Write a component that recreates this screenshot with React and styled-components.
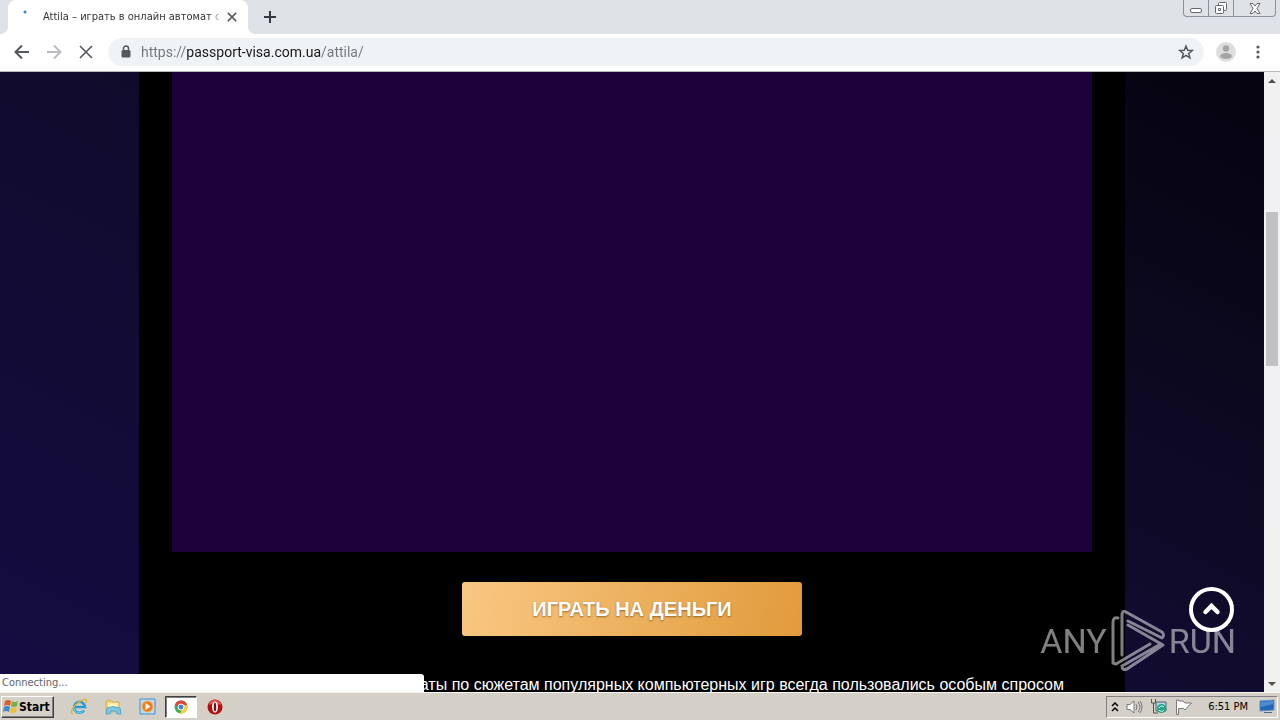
import React from "react";
import styled, { createGlobalStyle, css } from "styled-components";

const GlobalStyle = createGlobalStyle`
  * { box-sizing: border-box; }
  body { margin: 0; overflow: hidden; font-family: "DejaVu Sans Condensed", "DejaVu Sans", sans-serif; }
  button { border: 0; padding: 0; background: none; font: inherit; color: inherit; cursor: pointer; }
  svg { display: block; }
`;

const Screen = styled.div`
  display: flex;
  flex-direction: column;
  height: 100vh;
`;

/* Browser frame */
const TabStrip = styled.header`
  display: flex;
  flex: none;
  height: 34px;
  background: #dee1e6;
`;
const Tab = styled.div`
  position: relative;
  display: flex;
  align-items: center;
  width: 240px;
  margin-left: 8px;
  padding: 0 10px 0 12px;
  background: #fff;
  border-radius: 8px 8px 0 0;
  &::before, &::after {
    content: "";
    position: absolute;
    bottom: 0;
    width: 8px;
    height: 8px;
  }
  &::before { left: -8px; background: radial-gradient(circle at 0 0, #dee1e6 8px, #fff 8px); }
  &::after { right: -8px; background: radial-gradient(circle at 100% 0, #dee1e6 8px, #fff 8px); }
`;
const TabTitle = styled.span`
  flex: 1;
  min-width: 0;
  margin: 0 7px;
  overflow: hidden;
  white-space: nowrap;
  font-size: 11px;
  line-height: 16px;
  color: #303338;
  mask-image: linear-gradient(to right, #000 calc(100% - 10px), rgba(0, 0, 0, 0.3));
`;
const IconButton = styled.button`
  display: grid;
  place-items: center;
  flex: none;
  width: ${(p) => p.$size}px;
  height: ${(p) => p.$size}px;
`;
const NewTab = styled(IconButton)`
  margin: 3px 0 0 8px;
`;
const WindowControls = styled.div`
  display: flex;
  height: 17px;
  margin: 0 4px 0 auto;
  border: 1px solid #8b919b;
  border-top: 0;
  border-radius: 0 0 4px 4px;
`;
const WindowButton = styled.button`
  display: grid;
  place-items: center;
  width: ${(p) => p.$width}px;
  & + & { border-left: 1px solid #8b919b; }
`;

const Toolbar = styled.nav`
  display: flex;
  align-items: center;
  flex: none;
  height: 38px;
  padding: 0 10px 2px 6px;
  background: #fff;
  border-bottom: 1px solid #b6b7ba;
`;
const AddressBar = styled.label`
  display: flex;
  align-items: center;
  flex: 1;
  height: 28px;
  margin: 0 8px 0 6px;
  padding: 0 10px 0 12px;
  gap: 9px;
  border-radius: 14px;
  background: #f0f3f5;
`;
const AddressInput = styled.input`
  flex: 1;
  min-width: 0;
  height: 24px;
  border: 0;
  padding: 0;
  outline: 0;
  font: 14px/24px Roboto, "Noto Sans", sans-serif;
  color: #202124;
  background: linear-gradient(to right, #73777c 45px, #15171a 45px 180px, #73777c 180px);
  background-clip: text;
  -webkit-text-fill-color: transparent;
`;
const MenuButton = styled(IconButton)`
  margin-left: 6px;
`;

/* Page */
const Viewport = styled.div`
  position: relative;
  display: flex;
  flex: 1;
  min-height: 0;
`;
const Page = styled.main`
  flex: 1;
  min-width: 0;
  overflow: hidden;
  padding: 0 139px;
  background: linear-gradient(to top right, #150c42, #110b2e 50%, #0c081e 75%, #05030f);
`;
const Article = styled.article`
  display: flex;
  flex-direction: column;
  align-items: center;
  min-height: 100%;
  padding: 0 33px;
  background: #000;
`;
const GameFrame = styled.section`
  align-self: stretch;
  height: 480px;
  background: #1d003a;
`;
const PlayButton = styled.button`
  width: 340px;
  height: 54px;
  margin: 30px 0 38px;
  border-radius: 3px;
  background: linear-gradient(100deg, #f9c783, #e09b3b);
  color: #fff;
  font: bold 20px/54px "Liberation Sans", sans-serif;
  text-shadow: 0 1px 2px rgba(90, 50, 0, 0.6);
`;
const Intro = styled.p`
  align-self: stretch;
  margin: 0;
  padding-right: 28px;
  font: 16px/22px "Liberation Sans", sans-serif;
  color: #fff;
  text-align: right;
  white-space: nowrap;
`;
const ScrollTrack = styled.div`
  display: flex;
  flex-direction: column;
  width: 16px;
  background: #f1f1f1;
`;
const ScrollThumb = styled.div`
  flex: 154;
  margin: 0 2px;
  background: #c1c1c1;
`;
const Gap = styled.div`
  flex: ${(p) => p.$grow};
`;
const ScrollButton = styled.button`
  display: grid;
  place-items: center;
  height: 17px;
`;
const StatusBubble = styled.div`
  position: absolute;
  left: 0;
  bottom: 0;
  width: 424px;
  height: 18px;
  padding-left: 2px;
  border-radius: 0 3px 0 0;
  background: #fff;
  color: #5f6368;
  font-size: 11px;
  line-height: 18px;
`;
const Watermark = styled.div`
  position: absolute;
  right: 44px;
  bottom: 20px;
  display: flex;
  align-items: center;
  gap: 4px;
  height: 62px;
  opacity: 0.5;
  color: #fff;
  font: 34px/62px Roboto, "DejaVu Sans Condensed", sans-serif;
`;
const ToTop = styled.button`
  position: absolute;
  right: 46px;
  bottom: 60px;
  width: 45px;
  height: 45px;
`;

/* Taskbar */
const Taskbar = styled.footer`
  display: flex;
  align-items: center;
  flex: none;
  height: 28px;
  padding: 0 0 0 1px;
  background: #d4d0c8;
  border-top: 1px solid #f8f7f4;
`;
const raised = css`
  border: 1px solid;
  border-color: #fff #404040 #404040 #fff;
  box-shadow: inset -1px -1px #808080;
`;
const StartButton = styled.button`
  ${raised}
  display: flex;
  align-items: center;
  width: 53px;
  height: 22px;
  margin-right: 8px;
  font: bold 12px/20px "DejaVu Sans Condensed", sans-serif;
  color: #000;
`;
const TaskButton = styled.button`
  display: grid;
  place-items: center;
  width: ${(p) => (p.$active ? 32 : 34)}px;
  height: 22px;
  ${(p) => p.$active && css`
    margin: 0 1px;
    background: #fff;
    border: 1px solid;
    border-color: #404040 #fff #fff #404040;
    box-shadow: inset 1px 1px #808080;
  `}
`;
const Tray = styled.div`
  display: flex;
  align-items: center;
  height: 22px;
  margin: 0 2px 0 auto;
  padding: 0 1px 0 4px;
  gap: 7px;
  border: 1px solid;
  border-color: #808080 #fff #fff #808080;
  font-size: 11px;
  color: #000;
`;
const Clock = styled.time`
  margin: 0 4px 0 9px;
`;

const Line = ({ d, size = 16, color = "#54575b", width = 2 }) => (
  <svg width={size} height={size} viewBox="0 0 16 16" fill="none" stroke={color} strokeWidth={width}>
    <path d={d} />
  </svg>
);

const WindowsFlag = () => (
  <svg width="17" height="17" viewBox="0 0 17 17">
    <path d="M3 3q3-2 6 0L8 8Q5 6 2 8Z" fill="#e6592b" />
    <path d="M10 3q3 2 6 0l-1 5q-3 2-6 0Z" fill="#72b545" />
    <path d="M2 9q3-2 6 0l-1 5q-3-2-6 0Z" fill="#388bd1" />
    <path d="M9 9q3 2 6 0l-1 5q-3 2-6 0Z" fill="#f4bd35" />
  </svg>
);
const ExplorerIcon = () => (
  <svg width="18" height="18" viewBox="0 0 18 18" fill="none">
    <path d="M14 12.500A5.500 5.500 0 1 1 15 9H5" stroke="#269bd7" strokeWidth="2.600" />
    <path d="M13.500 12A5 5 0 0 1 4 10" stroke="#72cff2" />
    <path d="M3 16C-1 15 3 8 9 4s9-3 7 1" stroke="#e6b431" strokeWidth="1.500" />
  </svg>
);
const FolderIcon = () => (
  <svg width="18" height="18" viewBox="0 0 18 18">
    <path d="M2 3l5-1 1 2h7v10H2Z" fill="#efd073" stroke="#d4b35c" />
    <path d="M4 5h10v5H4Z" fill="#fff4b5" />
    <path d="M3 10q6-3 13 0l1 6h-4l-1-3H7l-1 3H2Z" fill="#7cc6e4" stroke="#5aa6c6" />
  </svg>
);
const PlayerIcon = () => (
  <svg width="17" height="17" viewBox="0 0 17 17">
    <path d="M1 1h15v15H1Z" fill="#b8dcf4" stroke="#438ec5" />
    <circle cx="8.500" cy="8.500" r="5.500" fill="#f17b16" stroke="#fbb15b" />
    <path d="M6.500 5v7l5-3.500Z" fill="#fff" />
  </svg>
);
const ChromeIcon = () => (
  <svg width="14" height="14" viewBox="0 0 14 14">
    <circle cx="7" cy="7" r="6.500" fill="#3fae53" />
    <path d="M1 4.500A6.500 6.500 0 0 1 13.200 5H7L5 9Z" fill="#e64537" />
    <path d="M13.200 5A6.500 6.500 0 0 1 6 13.500L9.500 7 8 5Z" fill="#f7cc39" />
    <circle cx="7" cy="7" r="3" fill="#4285e8" stroke="#fff" />
  </svg>
);
const OperaIcon = () => (
  <svg width="16" height="16" viewBox="0 0 16 16">
    <circle cx="8" cy="8" r="7.500" fill="#b50e12" />
    <path d="M2 6a6 5 0 0 1 12 0q-6-3-12 0" fill="#e75350" />
    <ellipse cx="8" cy="8" rx="3" ry="5.500" fill="#fff" />
    <ellipse cx="8" cy="8" rx="1.200" ry="4.500" fill="#8b090d" />
  </svg>
);
const SpeakerIcon = () => (
  <svg width="17" height="16" viewBox="0 0 17 16" fill="#fff" stroke="#77777a">
    <path d="M1 5.500h3L8 2v12l-4-3.500H1Z" />
    <path d="M10 5q2 3 0 6M12 3q4 5 0 10M14 2q4 6 0 12" fill="none" />
  </svg>
);
const NetworkIcon = () => (
  <svg width="18" height="17" viewBox="0 0 18 17">
    <path d="M6 4h10v9H6Z" fill="#a9d6e0" stroke="#54656b" />
    <path d="M1.500 1v4h4V1M3.500 5v10H8" fill="none" stroke="#4f5455" />
    <circle cx="11.500" cy="10.500" r="4.500" fill="#26a188" />
    <path d="M9 10a3 3 0 0 1 5-1M14 12a3 3 0 0 1-5 0" fill="none" stroke="#dff7ef" />
  </svg>
);
const FlagIcon = () => (
  <svg width="17" height="16" viewBox="0 0 17 16" fill="#fff" stroke="#77777a">
    <path d="M1.500 1v14.500h2V9.500h5l1.500 1.500 2.500-3 4-4h-6.500l-2-2H3.500V1Z" />
  </svg>
);
const DesktopIcon = () => (
  <svg width="17" height="15" viewBox="0 0 17 15">
    <path d="M1 2l14-1v10L1 12Z" fill="#2766b7" stroke="#5d90c8" />
    <path d="M2 3l12-1v3L2 8Z" fill="#508cd1" />
    <path d="M5 13h8v1H5Z" fill="#4a6a8c" />
  </svg>
);
const WatermarkLogo = () => (
  <svg width="54" height="62" viewBox="0 0 54 62" fill="none" stroke="#fff" strokeWidth="3" strokeLinejoin="round" strokeLinecap="round">
    <path d="M7 8Q2 7 2 12V53L5 54 39 34M11 45V5Q11 0 15 2L51 22Q54 25 51 28L17 11M17 15L52 35 16 59Q11 61 11 56L48 35" />
  </svg>
);
const Arrow = ({ up }) => (
  <svg width="8" height="4" viewBox="0 0 8 4"><path d={up ? "M0 4l4-4 4 4Z" : "M0 0h8L4 4Z"} fill="#505050" /></svg>
);

export default function App() {
  return (
    <Screen>
      <GlobalStyle />
      <TabStrip>
        <Tab>
          <svg width="16" height="16" viewBox="0 0 16 16"><circle cx="5" cy="3" r="1.500" fill="#4280ce" /></svg>
          <TabTitle>Attila – играть в онлайн автомат с</TabTitle>
          <IconButton $size={12} aria-label="Close tab"><Line size={12} d="M2.500 2.500l11 11M13.500 2.500l-11 11" /></IconButton>
        </Tab>
        <NewTab $size={28} aria-label="New tab"><Line d="M8 2v12M2 8h12" color="#34383f" /></NewTab>
        <WindowControls>
          <WindowButton $width={24} aria-label="Minimize">
            <svg width="12" height="14" viewBox="0 0 12 14"><rect x=".5" y="7.500" width="11" height="4" rx="1.500" fill="#fff" stroke="#62666e" /></svg>
          </WindowButton>
          <WindowButton $width={25} aria-label="Restore">
            <svg width="14" height="14" viewBox="0 0 14 14" fill="#fff" stroke="#62666e"><rect x="4.500" y="1.500" width="8" height="8" rx="1" /><rect x="1.500" y="4.500" width="8" height="8" rx="1" /><path d="M4.500 7.500h2v2h-2Z" /></svg>
          </WindowButton>
          <WindowButton $width={42} aria-label="Close">
            <svg width="12" height="11" viewBox="0 0 12 11"><path d="M1 .5h3l2 2.500 2-2.500h3L8 5.500l3 5H8L6 8l-2 2.500H1l3-5Z" fill="#fff" stroke="#62666e" /></svg>
          </WindowButton>
        </WindowControls>
      </TabStrip>
      <Toolbar>
        <IconButton $size={32} aria-label="Back"><Line d="M15 8H2M8 1.500L1.500 8 8 14.500" /></IconButton>
        <IconButton $size={32} aria-label="Forward"><Line d="M1 8h13M8 1.500L14.500 8 8 14.500" color="#b9bbbe" /></IconButton>
        <IconButton $size={32} aria-label="Stop"><Line d="M2 2l12 12M14 2L2 14" width={1.6} /></IconButton>
        <AddressBar>
          <svg width="12" height="14" viewBox="0 0 12 14" fill="none"><path d="M3 6.500h6V11H3Z" fill="#55595e" stroke="#55595e" strokeWidth="3" strokeLinejoin="round" /><path d="M3.500 6V3.500a2.500 2.500 0 0 1 5 0V6" stroke="#55595e" strokeWidth="1.500" /></svg>
          <AddressInput aria-label="Address" defaultValue="https://passport-visa.com.ua/attila/" />
          <IconButton $size={16} aria-label="Bookmark">
            <Line d="M8 2l1.700 4.200 4.500.3-3.500 2.900 1.200 4.400L8 11.400l-3.900 2.400 1.200-4.400-3.500-2.900 4.500-.3Z" width={1.5} />
          </IconButton>
        </AddressBar>
        <IconButton $size={28} aria-label="Profile">
          <svg width="20" height="20" viewBox="0 0 20 20"><circle cx="10" cy="10" r="10" fill="#dedede" /><circle cx="10" cy="6.500" r="3.200" fill="#a5a5a5" /><ellipse cx="10" cy="14" rx="6" ry="3" fill="#a5a5a5" /></svg>
        </IconButton>
        <MenuButton $size={24} aria-label="Menu">
          <svg width="4" height="14" viewBox="0 0 4 14" fill="#55595e"><circle cx="2" cy="2" r="1.600" /><circle cx="2" cy="7" r="1.600" /><circle cx="2" cy="12" r="1.600" /></svg>
        </MenuButton>
      </Toolbar>
      <Viewport>
        <Page>
          <Article>
            <GameFrame />
            <PlayButton>ИГРАТЬ НА ДЕНЬГИ</PlayButton>
            <Intro>маты по сюжетам популярных компьютерных игр всегда пользовались особым спросом</Intro>
          </Article>
        </Page>
        <ScrollTrack>
          <ScrollButton aria-label="Scroll up"><Arrow up /></ScrollButton>
          <Gap $grow={123} />
          <ScrollThumb />
          <Gap $grow={309} />
          <ScrollButton aria-label="Scroll down"><Arrow /></ScrollButton>
        </ScrollTrack>
        <StatusBubble>Connecting...</StatusBubble>
        <ToTop aria-label="Back to top">
          <svg width="45" height="45" viewBox="0 0 45 45" fill="none" stroke="#fff" strokeWidth="4"><circle cx="22.500" cy="22.500" r="20.500" /><path d="M16.500 25l6-6 6 6" strokeWidth="4.500" strokeLinecap="round" /></svg>
        </ToTop>
        <Watermark><span>ANY</span><WatermarkLogo /><span>RUN</span></Watermark>
      </Viewport>
      <Taskbar>
        <StartButton><WindowsFlag />Start</StartButton>
        <TaskButton aria-label="Internet Explorer"><ExplorerIcon /></TaskButton>
        <TaskButton aria-label="File Explorer"><FolderIcon /></TaskButton>
        <TaskButton aria-label="Media Player"><PlayerIcon /></TaskButton>
        <TaskButton $active aria-label="Chrome"><ChromeIcon /></TaskButton>
        <TaskButton aria-label="Opera"><OperaIcon /></TaskButton>
        <Tray>
          <svg width="8" height="10" viewBox="0 0 8 10" fill="none" stroke="#000" strokeWidth="1.500"><path d="M1 4l3-3 3 3M1 9l3-3 3 3" /></svg>
          <SpeakerIcon />
          <NetworkIcon />
          <FlagIcon />
          <Clock>6:51 PM</Clock>
          <DesktopIcon />
        </Tray>
      </Taskbar>
    </Screen>
  );
}
